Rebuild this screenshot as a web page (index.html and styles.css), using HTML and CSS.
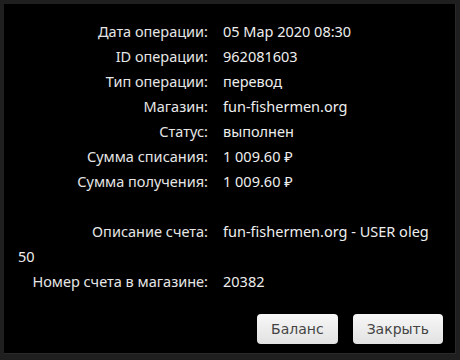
FILE: index.html
```html
<!DOCTYPE html>
<html>
<head>
<title>Операция</title>
<link rel="stylesheet" href="styles.css">
</head>
<body>

<div class="panel">
  <div class="info">
    <div class="row"><span class="label">Дата операции:</span><span class="value">05 Мар 2020 08:30</span></div>
    <div class="row"><span class="label">ID операции:</span><span class="value">962081603</span></div>
    <div class="row"><span class="label">Тип операции:</span><span class="value">перевод</span></div>
    <div class="row"><span class="label">Магазин:</span><span class="value">fun-fishermen.org</span></div>
    <div class="row"><span class="label">Статус:</span><span class="value">выполнен</span></div>
    <div class="row"><span class="label">Сумма списания:</span><span class="value">1 009.60 &#8381;</span></div>
    <div class="row"><span class="label">Сумма получения:</span><span class="value">1 009.60 &#8381;</span></div>
    <div class="row empty"></div>
    <div class="row"><span class="label">Описание счета:</span><span class="value">fun-fishermen.org - USER oleg 50</span></div>
    <div class="row"><span class="label">Номер счета в магазине:</span><span class="value">20382</span></div>
  </div>

  <div class="buttons">
    <a class="btn">Баланс</a>
    <a class="btn">Закрыть</a>
  </div>
</div>

</body>
</html>
```

FILE: styles.css
```css
body {
  margin: 0;
  background-color: #1f1f1f;
  font-family: "Noto Sans", sans-serif;
  color: #e6e6e6;
}

.panel {
  margin: 4px;
  height: 350px;
  box-sizing: border-box;
  background-color: black;
  border-right: 1px solid #2a2a2a;
  border-bottom: 1px solid #2a2a2a;
  padding: 15px 12px 0 14px;
}

.info {
  font-size: 14.5px;
  line-height: 25px;
  margin-right: 4px;
}

.row {
  min-height: 25px;
}

.label {
  display: inline-block;
  width: 190px;
  text-align: right;
  margin-right: 15px;
}

.value {
  color: #eeeeee;
}

.buttons {
  display: flex;
  justify-content: flex-end;
  gap: 15px;
  margin-top: 20px;
}

.btn {
  display: inline-block;
  height: 30px;
  line-height: 30px;
  padding: 0 14px;
  border-radius: 4px;
  background: linear-gradient(#f7f7f7, #e2e2e2);
  color: #444;
  font-family: "DejaVu Sans", Verdana, sans-serif;
  font-size: 14px;
}
```
